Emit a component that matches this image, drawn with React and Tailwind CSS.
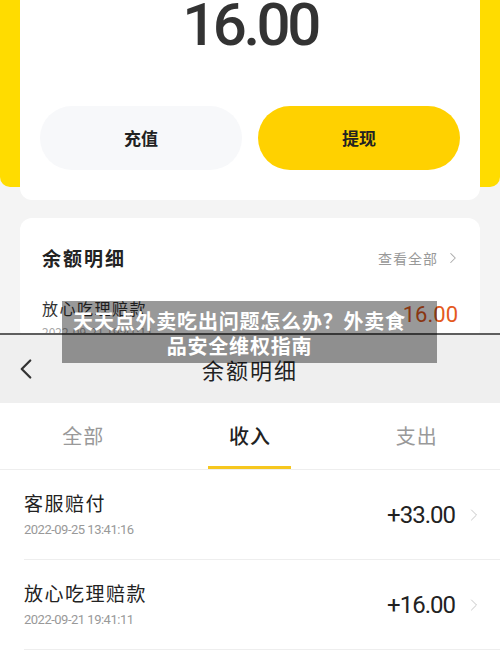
import { ChevronLeft, ChevronRight } from "lucide-react";

const cjk = "font-['Noto_Sans_CJK_SC',sans-serif]";
const num = "font-['Roboto','Noto_Sans_CJK_SC',sans-serif]";

const records = [
  { title: "客服赔付", time: "2022-09-25  13:41:16", amount: "+33.00" },
  { title: "放心吃理赔款", time: "2022-09-21  19:41:11", amount: "+16.00" },
];

const tabs = ["全部", "收入", "支出"];

export default function App() {
  return (
    <div className={`relative w-[500px] h-[666px] overflow-hidden bg-white ${cjk}`}>
      {/* first screenshot: wallet */}
      <div className="h-[333px] overflow-hidden bg-[#f4f4f4]">
        <div className="h-[187px] rounded-b-[10px] bg-[#ffdc00] px-5">
          <div className="h-[200px] rounded-b-[12px] bg-white px-5 flex flex-col">
            <div className={`${num} text-center text-[60px] font-medium leading-none tracking-[-3.5px] text-[#333] -mt-[5px]`}>16.00</div>
            <div className="mt-auto mb-[30px] flex gap-4">
              <button className="h-16 flex-1 rounded-full bg-[#f7f8fa] text-[17px] font-bold text-[#222]">充值</button>
              <button className="h-16 flex-1 rounded-full bg-[#ffd100] text-[17px] font-bold text-[#222]">提现</button>
            </div>
          </div>
        </div>

        <div className="mx-5 mt-[31px] rounded-[12px] bg-white pl-[22px] pr-[18px] pt-[26px]">
          <div className="flex items-center justify-between">
            <span className="text-[19px] font-bold tracking-[2px] text-[#222]">余额明细</span>
            <span className="flex items-center gap-[6px] text-[14px] tracking-[1px] text-[#999]">
              查看全部 <ChevronRight size={18} strokeWidth={1.4} className="text-[#aaa]" />
            </span>
          </div>
          <div className="mt-[24px] flex items-center justify-between pr-[4px]">
            <div>
              <div className="text-[16px] leading-[22px] tracking-[1.5px] text-[#333]">放心吃理赔款</div>
              <div className="mt-[4px] text-[12px] text-[#aaa]">2022-09-21 19:41:11</div>
            </div>
            <span className={`${num} text-[22px] text-[#e45a1d] -mt-[8px]`}>16.00</span>
          </div>
        </div>
      </div>

      {/* second screenshot: balance detail */}
      <div className="h-[2px] bg-[#5e5e5e]" />
      <div className="h-[68px] bg-[#efefef] flex items-center relative">
        <ChevronLeft size={34} strokeWidth={1.6} className="ml-[9px] text-[#333]" />
        <span className="absolute left-0 right-0 text-center text-[22px] tracking-[2px] text-[#222] pointer-events-none">余额明细</span>
      </div>
      <div className="h-[67px] grid grid-cols-3 border-b border-[#eee]">
        {tabs.map((t, i) => (
          <div key={t} className="relative flex items-center justify-center">
            <span className={i === 1 ? "text-[20px] font-medium tracking-[1px] text-[#222]" : "text-[20px] tracking-[1px] text-[#999]"}>{t}</span>
            {i === 1 && <div className="absolute bottom-0 h-[3px] w-[83px] bg-[#f6c71f]" />}
          </div>
        ))}
      </div>
      <div className="pl-6">
        {records.map((r) => (
          <div key={r.title} className="h-[90px] flex items-center border-b border-[#eee] pr-4">
            <div className="flex-1">
              <div className="text-[19px] leading-[26px] tracking-[1.5px] text-[#222]">{r.title}</div>
              <div className={`${num} mt-[4px] text-[13px] tracking-[-0.5px] text-[#999]`}>{r.time}</div>
            </div>
            <span className={`${num} text-[24px] tracking-[-1px] text-[#222]`}>{r.amount}</span>
            <ChevronRight size={20} strokeWidth={1.2} className="ml-[9px] text-[#c8c8c8]" />
          </div>
        ))}
      </div>

      {/* caption overlay */}
      <div className="absolute left-[62px] top-[301px] w-[375px] h-[62px] bg-black/40 pl-[8px] pr-[28px] pt-[7px] text-center text-[20px] leading-[25px] font-bold tracking-[0.8px] text-white">
        天天点外卖吃出问题怎么办？外卖食品安全维权指南
      </div>
    </div>
  );
}
